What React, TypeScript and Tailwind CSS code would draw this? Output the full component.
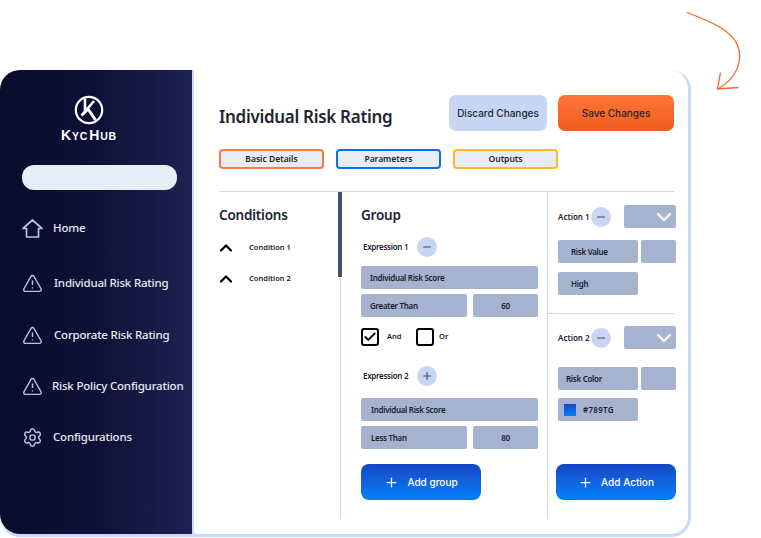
import { AlertTriangle, ChevronDown, ChevronUp, Check, Minus, Plus, Settings } from "lucide-react";

const body = "font-['Noto_Sans',sans-serif]";
const dm = "font-['Inter',sans-serif]";

function Field({ className = "", children }: { className?: string; children?: React.ReactNode }) {
  return (
    <div className={`h-[23px] flex items-center rounded-[2px] bg-[#a5b2d0] text-[8px] font-semibold tracking-[-0.3px] text-[#1a1c2c] ${className}`}>
      {children}
    </div>
  );
}

function RoundBtn({ plus }: { plus?: boolean }) {
  return (
    <div className="w-5 h-5 rounded-full bg-[#c8d6f4] flex items-center justify-center text-[#3f4660]">
      {plus ? <Plus size={12} strokeWidth={2.2} /> : <Minus size={12} strokeWidth={2.2} />}
    </div>
  );
}

function HomeIcon() {
  return (
    <svg width="21" height="21" viewBox="0 0 21 21" fill="none" stroke="currentColor" strokeWidth="1.7" strokeLinejoin="round">
      <path d="M1 10.5L10.5 2L20 10.5H16.5V19H4.5V10.5H1Z" />
    </svg>
  );
}

function NavItem({ icon, label, gap }: { icon: React.ReactNode; label: string; gap: string }) {
  return (
    <div className="flex items-center h-6 pl-[21px]">
      <div className="w-[22px] flex justify-center text-[#b4c3e4]">{icon}</div>
      <span className={`text-[11.5px] font-medium tracking-[-0.2px] text-[#e6eaf4] whitespace-nowrap ${gap}`}>{label}</span>
    </div>
  );
}

function BlueButton({ label, className = "" }: { label: string; className?: string }) {
  return (
    <div className={`w-[120px] h-9 rounded-[8px] bg-gradient-to-b from-[#1746c4] to-[#0280fb] flex items-center justify-center gap-2 text-white ${className}`}>
      <Plus size={15} strokeWidth={2} />
      <span className={`${dm} text-[10px] font-medium`}>{label}</span>
    </div>
  );
}

export default function App() {
  return (
    <div className={`${body} relative w-[761px] h-[538px] bg-white overflow-hidden pt-[70px]`}>
      {/* arrow */}
      <svg className="absolute left-[680px] top-[5px]" width="70" height="95" viewBox="680 5 70 95" fill="none" stroke="#f0692e" strokeWidth="1.3">
        <path d="M687 12.5C712 22 730 30 737 44C744 60 737 78 718 89" />
        <path d="M720.5 72.5L717.5 89L738.5 87.5" />
      </svg>

      <div className="flex w-[691px] h-[467px] rounded-[20px] border-r-[3px] border-b-[3px] border-[#c9d9fb]">
        {/* sidebar */}
        <aside className="w-[192px] shrink-0 rounded-l-[20px] bg-gradient-to-r from-[#090c2c] via-[#0e1136] to-[#1f2152] flex flex-col">
          <div className="flex flex-col items-center pt-[25px] pr-[14px]">
            <svg width="30" height="30" viewBox="0 0 30 30" fill="none">
              <circle cx="15" cy="15" r="13.2" stroke="white" strokeWidth="2.2" />
              <path d="M11 4V16.5L20 6" stroke="white" strokeWidth="2.6" />
              <path d="M7.5 20.5L14 14L21.5 25" stroke="white" strokeWidth="3" />
            </svg>
            <div className="font-['Liberation_Sans',sans-serif] font-bold mt-[3px] text-white leading-none text-[14px] h-[14px] tracking-[0.8px] whitespace-nowrap">
              K<span className="text-[10.5px]">YC</span>
              <span className="ml-[1px]">H</span>
              <span className="text-[10.5px]">UB</span>
            </div>
          </div>
          <div className="mt-[23px] ml-[22px] w-[155px] h-[25px] rounded-[12px] bg-[#e8ecf5]" />
          <nav className="mt-[26px] flex flex-col">
            <NavItem icon={<HomeIcon />} label="Home" gap="ml-[10px]" />
            <div className="h-[31px]" />
            <NavItem icon={<AlertTriangle size={21} strokeWidth={1.7} />} label="Individual Risk Rating" gap="ml-[11px]" />
            <div className="h-7" />
            <NavItem icon={<AlertTriangle size={21} strokeWidth={1.7} />} label="Corporate Risk Rating" gap="ml-[11px]" />
            <div className="h-[27px]" />
            <NavItem icon={<AlertTriangle size={21} strokeWidth={1.7} />} label="Risk Policy Configuration" gap="ml-[9px]" />
            <div className="h-[27px]" />
            <NavItem icon={<Settings size={21} strokeWidth={1.7} />} label="Configurations" gap="ml-[10px]" />
          </nav>
        </aside>

        {/* main */}
        <main className="flex-1 min-w-0 border-l-2 border-[#c9d9fb] pl-[25px] pr-[12px] pt-[25px]">
          <div className="flex items-center h-9 w-[455px]">
            <h1 className="text-[17px] font-semibold tracking-[-0.3px] text-[#22242f] leading-none pt-[7px]">Individual Risk Rating</h1>
            <div className={`${dm} ml-auto w-[98px] h-9 rounded-[7px] bg-[#c8d6f4] flex items-center justify-center text-[10px] font-medium text-[#22242f]`}>
              Discard Changes
            </div>
            <div className={`${dm} ml-[11px] w-[116px] h-9 rounded-[7px] bg-gradient-to-b from-[#ff7436] to-[#ef5d1f] flex items-center justify-center text-[10px] font-medium text-[#22242f]`}>
              Save Changes
            </div>
          </div>

          <div className="flex gap-3 mt-[18px] text-[8.5px] font-semibold text-[#22242f]">
            <div className="w-[105px] h-5 rounded-[4px] border-2 border-[#f47a47] bg-[#e8ecf5] flex items-center justify-center">Basic Details</div>
            <div className="w-[105px] h-5 rounded-[4px] border-2 border-[#0f6ef0] bg-[#e8ecf5] flex items-center justify-center">Parameters</div>
            <div className="w-[105px] h-5 rounded-[4px] border-2 border-[#fdb92e] bg-[#e8ecf5] flex items-center justify-center">Outputs</div>
          </div>

          <div className="mt-[22px] w-[457px] flex h-[328px]">
            {/* conditions */}
            <section className="w-[119px] shrink-0 border-t border-[#c9d9fb] pt-[13px]">
              <h2 className="text-[13.5px] font-semibold tracking-[-0.2px] text-[#22242f] leading-[20px]">Conditions</h2>
              <div className="mt-[15px] flex items-center h-4 text-[7.5px] font-semibold text-[#22242f]">
                <ChevronUp size={20} strokeWidth={2.6} className="text-black -ml-[3px]" />
                <span className="ml-[13px]">Condition 1</span>
              </div>
              <div className="mt-[15px] flex items-center h-4 text-[7.5px] font-semibold text-[#22242f]">
                <ChevronUp size={20} strokeWidth={2.6} className="text-black -ml-[3px]" />
                <span className="ml-[13px]">Condition 2</span>
              </div>
            </section>

            {/* group */}
            <section className="relative w-[210px] shrink-0 border-t border-[#c9d9fb] border-r border-r-[#c9d9fb] pl-[23px]">
              <div className="absolute left-[2px] top-0 bottom-0 w-px bg-[#c9d9fb]" />
              <div className="absolute left-0 top-0 w-1 h-[85px] bg-[#4a5069]" />
              <h2 className="mt-[13px] text-[13.5px] font-semibold tracking-[-0.2px] text-[#22242f] leading-[20px]">Group</h2>
              <div className="mt-3 flex items-center h-5 pl-[2px] text-[8px] font-semibold tracking-[-0.3px] text-[#22242f]">
                <span className="w-[54px]">Expression 1</span>
                <RoundBtn />
              </div>
              <Field className="mt-[9px] w-[177px] pl-[9px]">Individual Risk Score</Field>
              <div className="mt-[5px] flex gap-[6px]">
                <Field className="w-[106px] pl-[9px]">Greater Than</Field>
                <Field className="w-[65px] justify-center">60</Field>
              </div>
              <div className="mt-[11px] flex items-center text-[7.5px] font-semibold text-[#22242f]">
                <div className="w-[18px] h-[18px] rounded-[3px] border-2 border-black flex items-center justify-center">
                  <Check size={14} strokeWidth={3.2} className="text-black" />
                </div>
                <span className="ml-[8px] w-[29px]">And</span>
                <div className="w-[18px] h-[18px] rounded-[3px] border-2 border-black" />
                <span className="ml-[5px]">Or</span>
              </div>
              <div className="mt-5 flex items-center h-5 pl-[2px] text-[8px] font-semibold tracking-[-0.3px] text-[#22242f]">
                <span className="w-[54px]">Expression 2</span>
                <RoundBtn plus />
              </div>
              <Field className="mt-[12px] w-[177px] pl-[10px]">Individual Risk Score</Field>
              <div className="mt-[5px] flex gap-[6px]">
                <Field className="w-[106px] pl-[10px]">Less Than</Field>
                <Field className="w-[65px] justify-center">80</Field>
              </div>
              <BlueButton label="Add group" className="mt-[15px]" />
            </section>

            {/* actions */}
            <section className="flex-1 min-w-0 text-[8px] font-semibold text-[#22242f]">
              <div className="h-[123px] w-[126px] border-t border-b border-[#c9d9fb] pl-[10px] pt-[13px]">
                <div className="flex items-center h-[23px] w-[118px]">
                  <span className="w-[33px]">Action 1</span>
                  <RoundBtn />
                  <Field className="ml-[13px] w-[52px] justify-end text-white"><ChevronDown size={24} strokeWidth={2.4} /></Field>
                </div>
                <div className="mt-3 flex gap-[3px] w-[118px]">
                  <Field className="w-[80px] pl-[13px]">Risk Value</Field>
                  <Field className="w-[35px]" />
                </div>
                <Field className="mt-[9px] w-[80px] pl-[13px]">High</Field>
              </div>
              <div className="pl-[10px] pt-[12px] w-[128px]">
                <div className="flex items-center h-[23px] w-[118px]">
                  <span className="w-[33px]">Action 2</span>
                  <RoundBtn />
                  <Field className="ml-[13px] w-[52px] justify-end text-white"><ChevronDown size={24} strokeWidth={2.4} /></Field>
                </div>
                <div className="mt-[18px] flex gap-[3px] w-[118px]">
                  <Field className="w-[80px] pl-2">Risk Color</Field>
                  <Field className="w-[35px]" />
                </div>
                <Field className="mt-2 w-[80px] pl-[6px]">
                  <span className="w-3 h-3 bg-gradient-to-b from-[#1746c4] to-[#0280fb]" />
                  <span className="ml-[7px] tracking-[0.3px]">#789TG</span>
                </Field>
                <BlueButton label="Add Action" className="mt-[43px] -ml-[2px]" />
              </div>
            </section>
          </div>
        </main>
      </div>
    </div>
  );
}
